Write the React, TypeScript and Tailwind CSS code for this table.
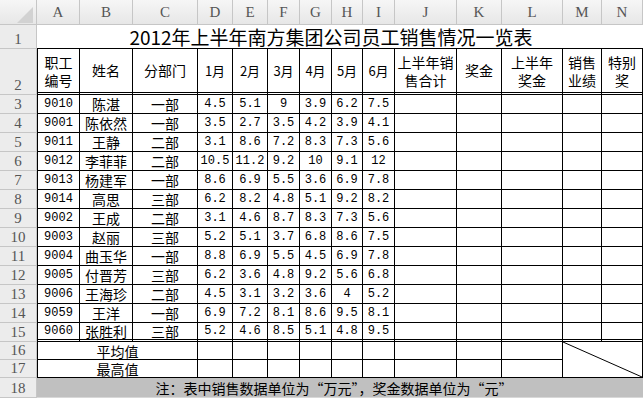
import React from "react";

const letters = ["A", "B", "C", "D", "E", "F", "G", "H", "I", "J", "K", "L", "M", "N"];

const data: [string, string, string, string[]][] = [
  ["9010", "陈湛", "一部", ["4.5", "5.1", "9", "3.9", "6.2", "7.5"]],
  ["9001", "陈依然", "一部", ["3.5", "2.7", "3.5", "4.2", "3.9", "4.1"]],
  ["9011", "王静", "二部", ["3.1", "8.6", "7.2", "8.3", "7.3", "5.6"]],
  ["9012", "李菲菲", "二部", ["10.5", "11.2", "9.2", "10", "9.1", "12"]],
  ["9013", "杨建军", "一部", ["8.6", "6.9", "5.5", "3.6", "6.9", "7.8"]],
  ["9014", "高思", "三部", ["6.2", "8.2", "4.8", "5.1", "9.2", "8.2"]],
  ["9002", "王成", "二部", ["3.1", "4.6", "8.7", "8.3", "7.3", "5.6"]],
  ["9003", "赵丽", "三部", ["5.2", "5.1", "3.7", "6.8", "8.6", "7.5"]],
  ["9004", "曲玉华", "一部", ["8.8", "6.9", "5.5", "4.5", "6.9", "7.8"]],
  ["9005", "付晋芳", "三部", ["6.2", "3.6", "4.8", "9.2", "5.6", "6.8"]],
  ["9006", "王海珍", "二部", ["4.5", "3.1", "3.2", "3.6", "4", "5.2"]],
  ["9059", "王洋", "一部", ["6.9", "7.2", "8.1", "8.6", "9.5", "8.1"]],
  ["9060", "张胜利", "三部", ["5.2", "4.6", "8.5", "5.1", "4.8", "9.5"]],
];

const colHdr =
  "flex items-center justify-center bg-linear-to-b from-[#f6f6f6] to-[#e7e7e7] border-r border-b border-[#c6c6c6] text-[#555] text-[15px] font-['Liberation_Serif',serif] pt-[1px]";
const rowHdr =
  "flex items-end justify-center bg-[#ececec] border-r border-b border-[#c6c6c6] text-[#555] text-[15px] leading-[18px] font-['Liberation_Serif',serif]";
const cell =
  "flex items-center justify-center border-r border-b border-black text-black";
const cjk = "font-['Noto_Sans_CJK_SC',sans-serif]";
const mono = "font-['Liberation_Mono',monospace] text-[12px]";

export default function App() {
  return (
    <div
      lang="zh-CN"
      className="w-[643px] h-[398px] overflow-hidden bg-white grid grid-cols-[37px_43px_53px_65px_35px_35px_32px_32px_31px_32px_62px_45px_61px_39px_41px] grid-rows-[25px_24px_46px_repeat(13,19px)_18px_18px_20px]"
    >
      {/* corner */}
      <div className="relative bg-linear-to-b from-[#f6f6f6] to-[#e7e7e7] border-r border-b border-[#c6c6c6]">
        <svg className="absolute left-0 top-0" width="37" height="25">
          <polygon points="33,7 33,23 17,23" fill="#d2d2d2" />
        </svg>
      </div>
      {letters.map((l) => (
        <div key={l} className={colHdr}>
          {l}
        </div>
      ))}

      {/* row 1 */}
      <div className={rowHdr}>1</div>
      <div
        className={`col-span-14 flex items-center justify-center pl-[0px] pr-[18px] text-[19px] leading-none text-black border-b border-black ${cjk}`}
      >
        2012年上半年南方集团公司员工销售情况一览表
      </div>

      {/* row 2 */}
      <div className={rowHdr}>2</div>
      <div className={`${cell} border-l border-b-[3px] border-double flex-col text-[14px] leading-[18px] ${cjk}`}>
        <span>职工</span>
        <span>编号</span>
      </div>
      <div className={`${cell} border-b-[3px] border-double text-[14px] ${cjk}`}>姓名</div>
      <div className={`${cell} border-b-[3px] border-double text-[14px] ${cjk}`}>分部门</div>
      {["1月", "2月", "3月", "4月", "5月", "6月"].map((m) => (
        <div key={m} className={`${cell} border-b-[3px] border-double text-[13px] ${cjk}`}>
          {m}
        </div>
      ))}
      <div className={`${cell} border-b-[3px] border-double flex-col text-[14px] leading-[18px] ${cjk}`}>
        <span>上半年销</span>
        <span>售合计</span>
      </div>
      <div className={`${cell} border-b-[3px] border-double text-[14px] ${cjk}`}>奖金</div>
      <div className={`${cell} border-b-[3px] border-double flex-col text-[14px] leading-[18px] ${cjk}`}>
        <span>上半年</span>
        <span>奖金</span>
      </div>
      <div className={`${cell} border-b-[3px] border-double flex-col text-[14px] leading-[18px] ${cjk}`}>
        <span>销售</span>
        <span>业绩</span>
      </div>
      <div className={`${cell} border-b-[3px] border-double flex-col text-[14px] leading-[18px] ${cjk}`}>
        <span>特别</span>
        <span>奖</span>
      </div>

      {/* data rows */}
      {data.map(([id, name, dept, nums], i) => {
        const last = i === data.length - 1;
        const bb = last ? " border-b-[3px] border-double" : "";
        return (
          <React.Fragment key={id}>
            <div className={rowHdr}>{i + 3}</div>
            <div className={`${cell} border-l${bb} ${mono}`}>{id}</div>
            <div className={`${cell}${bb} text-[14px] leading-none ${cjk}`}>{name}</div>
            <div className={`${cell}${bb} text-[14px] leading-none ${cjk}`}>{dept}</div>
            {nums.map((n, j) => (
              <div key={j} className={`${cell}${bb} ${mono}`}>
                {n}
              </div>
            ))}
            <div className={`${cell}${bb}`} />
            <div className={`${cell}${bb}`} />
            <div className={`${cell}${bb}`} />
            <div className={`${cell}${bb}`} />
            <div className={`${cell}${bb}`} />
          </React.Fragment>
        );
      })}

      {/* row 16 */}
      <div className={rowHdr}>16</div>
      <div className={`col-span-3 ${cell} border-l text-[14px] leading-none ${cjk}`}>平均值</div>
      {Array.from({ length: 9 }).map((_, j) => (
        <div key={j} className={cell} />
      ))}
      <div className={`col-span-2 row-span-2 relative ${cell}`}>
        <svg className="absolute inset-0 w-full h-full" preserveAspectRatio="none" viewBox="0 0 100 100">
          <line x1="0" y1="0" x2="100" y2="100" stroke="black" strokeWidth="1" vectorEffect="non-scaling-stroke" />
        </svg>
      </div>

      {/* row 17 */}
      <div className={rowHdr}>17</div>
      <div className={`col-span-3 ${cell} border-l text-[14px] leading-none ${cjk}`}>最高值</div>
      {Array.from({ length: 9 }).map((_, j) => (
        <div key={j} className={cell} />
      ))}

      {/* row 18 */}
      <div className={rowHdr}>18</div>
      <div
        className={`col-span-14 flex items-center justify-center bg-[#c0c0c0] border-b border-[#d8d8d8] text-[14px] leading-none text-black pr-[12px] ${cjk}`}
      >
        注：表中销售数据单位为“万元”，奖金数据单位为“元”
      </div>
    </div>
  );
}
